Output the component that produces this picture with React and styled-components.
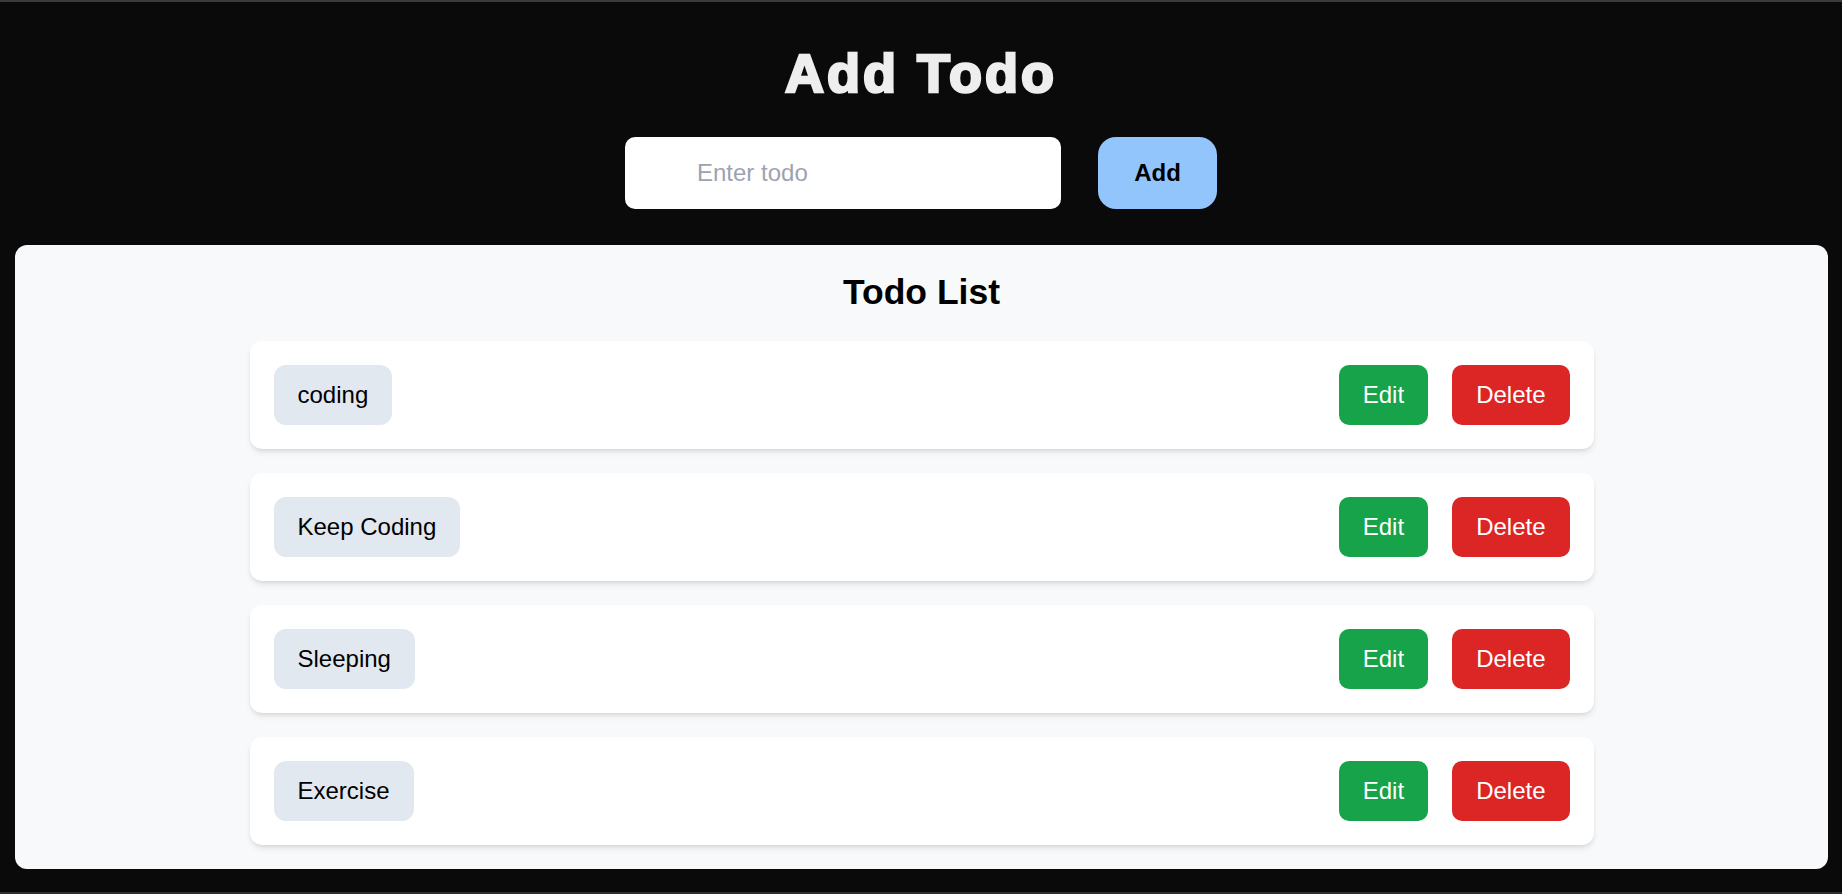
import React, { Component } from 'react';
import styled, { createGlobalStyle } from 'styled-components';

const GlobalStyle = createGlobalStyle`
	* {
		box-sizing: border-box;
	}
	body {
		margin: 0;
		background: #0a0a0a;
		font-family: 'Liberation Sans', Arial, sans-serif;
	}
`;

const Page = styled.div`
	display: flex;
	flex-direction: column;
	height: 100vh;
	background: #0a0a0a;
	border-top: 2px solid #3a3a3a;
	border-bottom: 2px solid #2e2e2e;
`;

const Heading = styled.h1`
	margin: 40px 0 0;
	text-align: center;
	font-size: 54px;
	line-height: 62px;
	font-weight: 700;
	letter-spacing: 3px;
	color: #eeeeee;
	-webkit-text-stroke: 2.6px #eeeeee;
`;

const AddForm = styled.form`
	display: flex;
	justify-content: center;
	gap: 37px;
	margin-top: 33px;
`;

const TodoInput = styled.input`
	width: 436px;
	height: 72px;
	padding: 0 16px 0 72px;
	border: none;
	border-radius: 10px;
	background: #ffffff;
	font-family: inherit;
	font-size: 24px;
	color: #111827;
	outline: none;

	&::placeholder {
		color: #9ca3af;
	}
`;

const AddButton = styled.button`
	width: 119px;
	height: 72px;
	border: none;
	border-radius: 18px;
	background: #93c5fd;
	color: #000000;
	font-family: inherit;
	font-size: 24px;
	font-weight: 700;
	cursor: pointer;
`;

const ListPanel = styled.section`
	margin: 36px 14px 0 15px;
	padding: 24px 0 24px;
	background: #f8f9fb;
	border-radius: 12px;
`;

const ListTitle = styled.h2`
	margin: 0 0 26px;
	text-align: center;
	font-size: 35.5px;
	line-height: 46px;
	font-weight: 700;
	color: #000000;
`;

const List = styled.ul`
	display: flex;
	flex-direction: column;
	gap: 24px;
	width: 1344px;
	margin: 0 auto;
	padding: 0;
	list-style: none;
`;

const Row = styled.li`
	display: flex;
	align-items: center;
	gap: 24px;
	padding: 24px;
	background: #ffffff;
	border-radius: 12px;
	box-shadow: 0 4px 6px -1px rgba(0, 0, 0, 0.1), 0 2px 4px -2px rgba(0, 0, 0, 0.1);
`;

const Chip = styled.span`
	margin-right: auto;
	padding: 12px 24px;
	background: #e2e8f0;
	border-radius: 12px;
	font-size: 24px;
	line-height: 36px;
	color: #000000;
`;

const ActionButton = styled.button`
	padding: 12px 24px;
	border: none;
	border-radius: 10px;
	background: ${props => (props.danger ? '#dc2626' : '#16a34a')};
	color: #ffffff;
	font-family: inherit;
	font-size: 24px;
	line-height: 36px;
	cursor: pointer;
`;

class App extends Component {
	state = {
		text: '',
		todos: ['coding', 'Keep Coding', 'Sleeping', 'Exercise']
	};

	handleChange = e => {
		this.setState({ text: e.target.value });
	};

	addTodo = e => {
		e.preventDefault();
		const { text, todos } = this.state;
		if (!text.trim()) return;
		this.setState({ todos: [...todos, text], text: '' });
	};

	removeTodo = index => () => {
		this.setState({ todos: this.state.todos.filter((_, i) => i !== index) });
	};

	render() {
		const { text, todos } = this.state;

		return (
			<Page>
				<GlobalStyle />
				<Heading>Add Todo</Heading>
				<AddForm onSubmit={this.addTodo}>
					<TodoInput
						type="text"
						placeholder="Enter todo"
						value={text}
						onChange={this.handleChange}
					/>
					<AddButton type="submit">Add</AddButton>
				</AddForm>
				<ListPanel>
					<ListTitle>Todo List</ListTitle>
					<List>
						{todos.map((todo, i) => (
							<Row key={i}>
								<Chip>{todo}</Chip>
								<ActionButton>Edit</ActionButton>
								<ActionButton danger onClick={this.removeTodo(i)}>
									Delete
								</ActionButton>
							</Row>
						))}
					</List>
				</ListPanel>
			</Page>
		);
	}
}

export default App;
